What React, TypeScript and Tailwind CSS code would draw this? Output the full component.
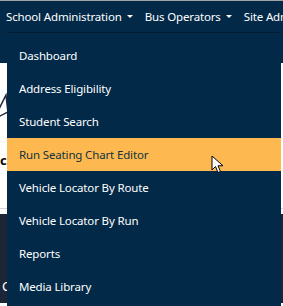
import React from "react";

const items = [
  "Dashboard",
  "Address Eligibility",
  "Student Search",
  "Run Seating Chart Editor",
  "Vehicle Locator By Route",
  "Vehicle Locator By Run",
  "Reports",
  "Media Library",
];

const Caret = () => (
  <span className="ml-[5px] inline-block h-0 w-0 border-x-[3px] border-t-[3px] border-x-transparent border-t-white align-middle" />
);

export default function App() {
  const active = 3;

  return (
    <div className="relative h-[306px] w-[283px] overflow-hidden bg-white font-['Noto_Sans',sans-serif] text-[11.5px] tracking-[-0.15px]">
      <div className="h-px bg-[#a3a3a3]" />

      {/* Navbar */}
      <nav className="h-[62px] bg-[#022a48]">
        <div className="flex h-[31px] items-center gap-[12px] whitespace-nowrap pl-[6px] text-white">
          <span className="flex items-center">
            School Administration
            <Caret />
          </span>
          <span className="flex items-center">
            Bus Operators
            <Caret />
          </span>
          <span>Site Administration</span>
        </div>
      </nav>

      {/* Page behind the menu */}
      <div className="relative h-[145px] bg-white">
        <svg className="absolute left-[-4px] top-[30px]" width="14" height="30" viewBox="0 0 14 30">
          <path d="M0 22 L10 2 L12 20" fill="none" stroke="#1f2b3a" strokeWidth="1.5" />
          <path d="M-2 26 Q6 22 14 18" fill="none" stroke="#1f2b3a" strokeWidth="1.5" />
        </svg>
        <span className="absolute left-0 top-[88px] text-[13px] font-bold text-black">c</span>
      </div>
      <div className="h-px bg-[#d5d5d5]" />
      <div className="h-[5px] bg-white" />
      <div className="relative h-[89px] bg-[#1b2535]">
        <span className="absolute left-[2px] top-[63px] text-[13px] text-white">C</span>
      </div>

      {/* Dropdown */}
      <div className="absolute left-[7px] top-[32px] w-[274px] border-t border-[#011e35] bg-[#022a48] pt-[6px] pb-[8px]">
        {items.map((label, i) => (
          <div
            key={label}
            className={`flex h-[33px] items-center pl-[12px] ${
              i === active ? "bg-[#fdb94f] text-[#0f3340]" : "text-white"
            }`}
          >
            {label}
          </div>
        ))}
      </div>

      {/* Mouse cursor */}
      <svg className="absolute left-[211px] top-[155px]" width="14" height="20" viewBox="0 0 14 20">
        <path
          d="M1 1 L1 15 L4.5 11.5 L7 17.5 L9.5 16.5 L7 10.8 L12 10.8 Z"
          fill="white"
          stroke="black"
          strokeWidth="1"
          strokeLinejoin="round"
        />
      </svg>
    </div>
  );
}
